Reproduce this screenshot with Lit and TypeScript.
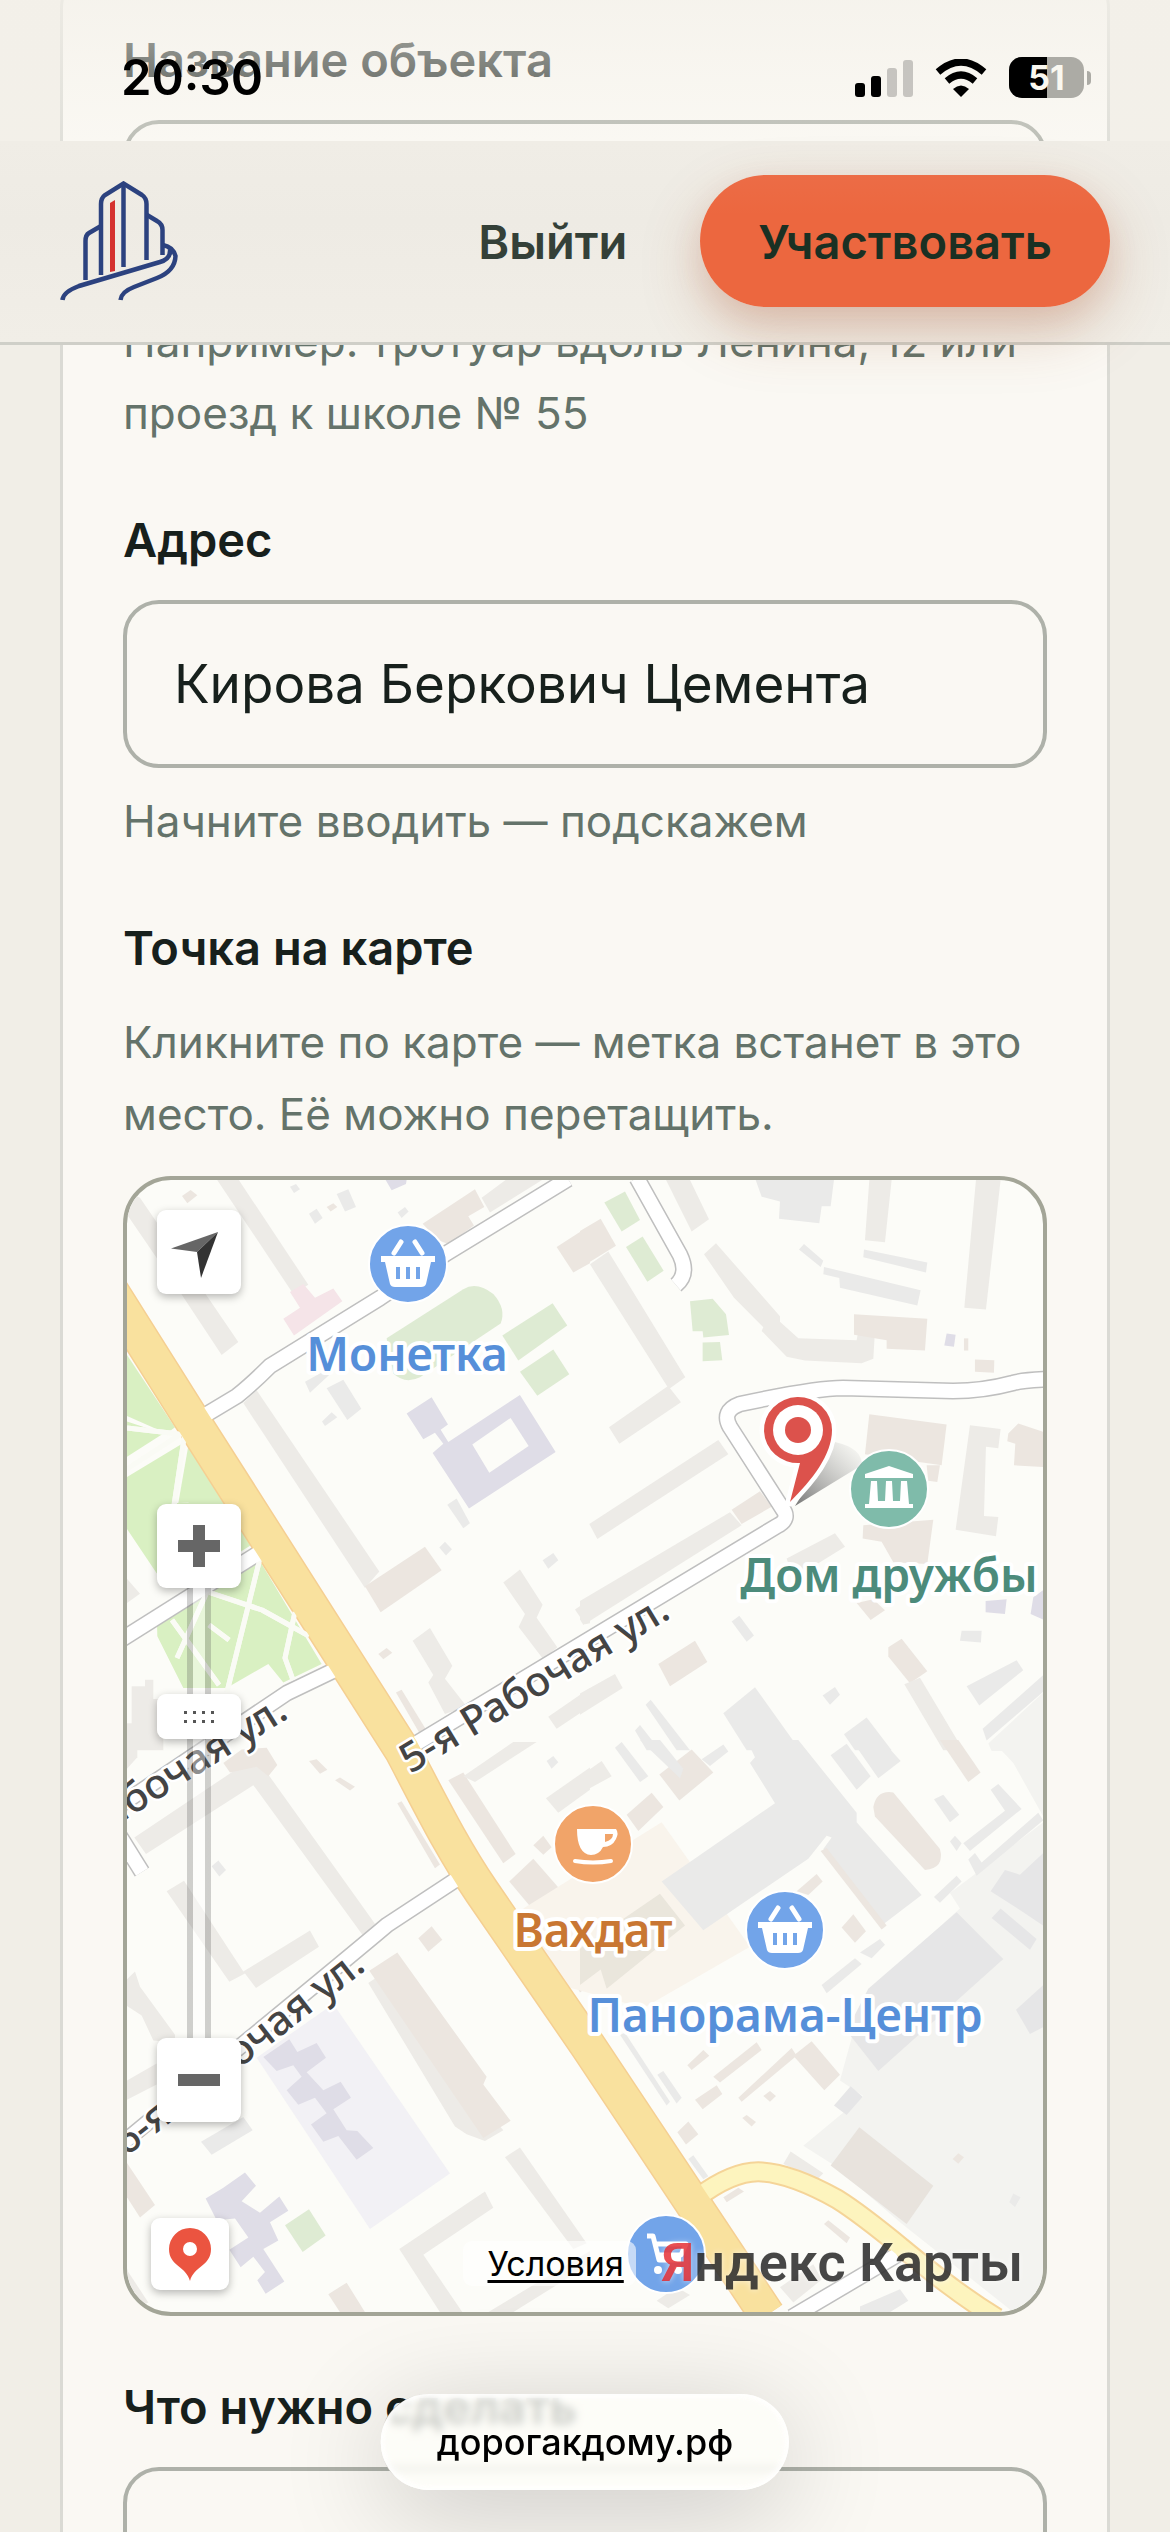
import { LitElement, html, svg, css } from "lit";
import { customElement, property, state } from "lit/decorators.js";

type Shape = [kind: string, points: string];

interface Tile {
  transform: string;
  shapes: Shape[];
}

interface Road {
  kind: string;
  d: string;
}

interface Place {
  name: string;
  kind: string;
  icon: string;
  x: number;
  y: number;
  textX: number;
  textY: number;
}

const TILES: Tile[] = [
  {
    transform: "translate(-7 -10) scale(.3333 .37)",
    shapes: [
      ["park", "21,500 165,695 140,712 21,665"],
      ["park", "21,680 130,712 21,775"],
      ["park", "21,830 190,738 162,900 205,900 260,800 330,900 400,1010 240,1100 110,1090 21,970"],
      ["park", "205,745 320,895 175,900"],
      ["park", "110,1190 240,1120 390,1060 425,1065 605,1335 490,1385 445,1335 320,1400 190,1400 112,1260"],
      ["house", "21,60 60,75 355,465 305,500 180,330 21,120"],
      ["house", "290,25 355,25 565,310 520,335"],
      ["pink", "510,330 550,308 585,345 640,320 667,355 522,447 490,402 540,372"],
      ["shed", "650,65 685,52 708,100 675,112"],
      ["shed", "567,118 590,105 608,130 585,145"],
      ["shed", "833,115 855,100 866,112 845,130"],
      ["shed", "510,45 528,38 540,52 522,62"],
      ["beige", "186,70 212,54 232,68 202,90"],
      ["beige", "620,100 640,90 652,100 632,112"],
      ["school", "797,27 860,27 858,38 815,55"],
      ["beige", "908,145 1065,52 1093,100 1045,125 1062,150 985,200 955,190"],
      ["house", "1085,75 1160,25 1270,25 1110,115"],
      ["beige", "1310,208 1410,150 1410,252 1360,277"],
      ["green", "800,455 1030,322 Q1070,300 1120,335 Q1160,375 1142,415 L900,560 Q855,580 820,550"],
      ["green", "1147,447 1298,360 1342,420 1195,515"],
      ["green", "1200,545 1300,485 1348,552 1252,610"],
      ["shed", "620,590 670,567 724,645 682,676"],
      ["shed", "555,572 620,540 630,552 570,602"],
      ["shed", "606,680 635,655 652,668 615,692"],
      ["house", "370,630 410,595 778,1085 735,1130"],
      ["beige", "735,1125 915,1018 965,1082 782,1195"],
      ["school", "860,658 935,614 984,688 962,702 985,735 1200,608 1307,762 1047,915 938,765 970,740 945,710 910,728"],
      ["ground", "1057,742 1172,670 1226,746 1108,818"],
      ["shed", "982,905 1010,888 1050,955 1030,968"],
      ["shed", "958,1020 975,1005 996,1025 978,1042"],
      ["shed", "1268,1055 1300,1035 1315,1055 1285,1078"],
      ["house", "1150,1115 1200,1080 1268,1175 1250,1210 1312,1290 1270,1322 1196,1235 1215,1200"],
      ["house", "878,1272 930,1238 997,1340 975,1375 1040,1450 975,1470 925,1385 940,1365"],
      ["house", "1285,1478 1410,1400 1410,1450 1310,1510"],
      ["house", "1365,1188 1410,1160 1410,1225 1395,1228"],
      ["beige", "775,1308 800,1292 817,1305 790,1322"],
      ["house", "35,1395 75,1395 75,1378 100,1378 100,1430 130,1430 130,1568 21,1568 21,1495 35,1495"],
      ["house", "21,1105 60,1145 21,1170"],
      ["beige", "828,1412 845,1405 930,1530 910,1540"],
    ],
  },
  {
    transform: "translate(453 -10) scale(.3333 .37)",
    shapes: [
      ["house", "258,27 330,27 387,133 335,166"],
      ["green", "73,88 135,58 180,135 125,166"],
      ["green", "138,208 188,180 251,272 202,302"],
      ["green", "330,355 398,348 438,390 447,446 370,453 368,436 338,436"],
      ["green", "368,466 420,465 427,514 368,517"],
      ["beige", "0,165 62,132 108,205 0,265"],
      ["house", "30,255 85,220 316,560 270,590 303,628 118,740 87,695 262,585"],
      ["house", "28,957 415,730 445,768 52,997"],
      ["house", "0,1165 450,925 485,960 10,1230 0,1215"],
      ["beige", "455,918 540,868 575,910 485,957"],
      ["house", "372,228 408,198 600,395 600,410 655,455 830,460 835,435 885,435 880,510 845,522 675,515 620,505 545,435 550,425 462,345"],
      ["shed", "527,27 762,27 752,98 725,98 718,144 597,132 600,85 545,72"],
      ["house", "868,27 935,27 915,195 855,190"],
      ["house", "1188,27 1262,27 1218,377 1153,372"],
      ["shed", "657,215 672,200 730,245 722,262"],
      ["shed", "852,215 1042,250 1038,277 850,236"],
      ["shed", "732,262 1022,325 1012,366 780,318 778,292 730,282"],
      ["beige", "822,390 1042,402 1035,488 920,483 920,460 822,445"],
      ["school", "1100,442 1127,445 1122,478 1093,474"],
      ["beige", "1152,455 1165,455 1165,488 1152,488"],
      ["beige", "1185,512 1243,514 1242,548 1185,545"],
      ["beige", "868,660 1100,688 1085,798 855,768"],
      ["beige", "1040,798 1080,798 1072,843 1045,840"],
      ["house", "1170,690 1262,700 1255,752 1218,748 1212,935 1255,938 1248,990 1127,972"],
      ["beige", "1315,685 1390,708 1390,803 1302,798 1306,740 1282,733 1285,712"],
      ["beige", "850,960 1060,945 1042,1065 940,1060 905,1005 848,996"],
      ["house", "620,1050 765,982 795,1018 640,1105"],
      ["beige", "830,1170 880,1160 915,1190 872,1216"],
      ["school", "1217,1165 1280,1160 1275,1200 1217,1195"],
      ["school", "1360,1155 1390,1135 1390,1215 1352,1200"],
      ["shed", "1145,1245 1205,1245 1203,1277 1140,1272"],
      ["shed", "1160,1395 1310,1325 1330,1352 1198,1447"],
      ["beige", "925,1290 965,1267 1042,1355 990,1387 925,1315"],
      ["house", "973,1390 1020,1372 1150,1568 1090,1568"],
      ["beige", "235,1335 345,1272 382,1330 270,1395"],
      ["house", "0,1415 105,1362 128,1400 0,1472"],
      ["shed", "455,1220 478,1205 522,1258 500,1275"],
      ["shed", "430,1468 525,1398 660,1568 500,1568"],
      ["shed", "792,1525 860,1480 935,1568 825,1568"],
      ["shed", "197,1445 212,1432 330,1568 290,1568"],
      ["shed", "165,1515 180,1500 240,1568 200,1568"],
      ["shed", "728,1420 765,1397 780,1418 750,1445"],
      ["shed", "1208,1510 1390,1365 1390,1410 1220,1542"],
      ["yard", "1225,1550 1390,1412 1390,1570 1235,1570"],
    ],
  },
  {
    transform: "translate(-7 560) scale(.3333 .3827)",
    shapes: [
      ["house", "43,255 360,70 420,60 765,480 730,512 400,118 78,298"],
      ["beige", "310,60 365,25 440,20 472,65 445,95 410,70 330,85"],
      ["house", "140,395 192,368 370,605 570,498 597,540 408,648 375,610 328,632"],
      ["shed", "275,330 295,315 318,340 298,357"],
      ["house", "21,625 45,605 60,645 165,770 165,790 100,785 65,720 21,695"],
      ["house", "21,890 110,845 110,900 21,940"],
      ["shed", "243,1050 370,985 398,1020 275,1084"],
      ["schoolyard", "410,830 640,690 990,1133 750,1278"],
      ["school", "430,828 508,782 532,815 590,792 618,830 560,868 610,915 662,893 693,935 640,965 680,1020 712,1022 760,1066 710,1097 655,1035 610,1050 573,1005 620,975 585,935 535,953 500,915 545,880 520,850 470,865"],
      ["school", "257,1198 310,1170 375,1130 408,1165 365,1205 420,1235 478,1193 505,1230 450,1260 475,1308 430,1330 493,1415 437,1447 412,1412 435,1390 400,1350 362,1378 328,1332 385,1300 345,1250 290,1255"],
      ["green", "495,1268 567,1226 617,1295 548,1338"],
      ["beige", "21,1105 105,1215 60,1248 21,1195"],
      ["beige", "625,1448 680,1418 735,1495 660,1495"],
      ["house", "21,1385 85,1470 60,1480 21,1440"],
      ["house", "745,635 805,600 1080,950 1150,1020 1095,1048 1040,1030 1005,1010"],
      ["beige", "748,603 832,555 1100,880 1090,900 1172,995 1090,1040"],
      ["beige", "895,518 935,487 967,522 925,553"],
      ["house", "1155,1090 1200,1065 1400,1315 1360,1330"],
      ["house", "838,1330 1095,1180 1120,1222 910,1345 1027,1495 960,1495"],
      ["house", "1105,1495 1410,1335 1410,1370 1180,1495"],
      ["beige", "985,105 1030,85 1187,298 1150,322"],
      ["house", "1030,95 1180,5 1250,5 1065,110"],
      ["house", "1278,152 1410,72 1410,130 1315,190"],
      ["beige", "1240,275 1270,250 1295,280 1270,300"],
      ["beige", "1168,370 1240,310 1375,445 1330,475 1260,465"],
      ["beige", "1320,560 1410,525 1410,640 1380,660"],
      ["beige", "567,55 590,50 622,78 600,88"],
      ["beige", "645,105 660,98 705,122 690,132"],
      ["beige", "832,165 845,160 960,325 945,335"],
      ["shed", "1280,55 1300,42 1315,58 1295,75"],
      ["house", "21,0 52,0 52,45 21,75"],
    ],
  },
  {
    transform: "translate(453 560) scale(.3333 .3827)",
    shapes: [
      ["yard", "1390,215 1110,400 1140,440 860,660 840,700 780,890 850,930 670,1060 760,1110 960,1260 1300,1495 1390,1495"],
      ["yard", "1235,0 1390,0 1390,200 1300,60"],
      ["cream", "-170,440 245,215 510,540 190,700 -60,640"],
      ["shed", "500,0 655,0 830,190 830,215 1025,405 905,485 730,285 755,255 740,250 685,310 370,497 245,370 585,165 510,60 525,45"],
      ["beige", "722,290 740,282 920,485 905,495"],
      ["yellow", "0,545 240,402 315,485 80,650 62,600 0,640"],
      ["beige", "140,195 215,138 250,175 175,238"],
      ["beige", "238,90 335,25 400,85 298,158"],
      ["shed", "752,40 800,10 872,95 830,130"],
      ["shed", "815,0 905,0 962,55 895,100"],
      ["shed", "105,20 125,5 205,95 180,110"],
      ["shed", "180,0 240,0 310,75 300,100"],
      ["shed", "365,50 430,12 445,30 390,68"],
      ["house", "0,95 65,55 95,95 0,140"],
      ["beige", "1080,0 1135,0 1202,85 1165,110"],
      ["beige", "880,175 Q890,130 940,137 L1080,285 Q1095,335 1035,340 L885,200"],
      ["shed", "1062,155 1090,143 1138,195 1110,215"],
      ["shed", "1232,130 1255,115 1325,180 1170,290 1150,270 1275,185"],
      ["shed", "1165,312 1185,295 1205,320 1375,190 1390,210 1190,355"],
      ["shed", "1110,265 1125,250 1145,270 1130,290"],
      ["shed", "1062,410 1130,355 1145,370 1080,425"],
      ["store", "865,650 1130,450 1270,572 895,865 800,760"],
      ["store", "1232,395 1275,340 1320,352 1390,295 1390,485 1330,450"],
      ["store", "1235,465 1262,440 1370,520 1350,548"],
      ["store", "1308,705 1390,640 1390,750 1350,768"],
      ["beige", "785,490 820,455 858,500 825,530"],
      ["beige", "650,395 710,350 728,370 685,405"],
      ["shed", "725,640 825,570 845,585 740,662"],
      ["shed", "840,555 900,520 915,535 875,570"],
      ["beige", "640,825 695,787 780,875 733,915"],
      ["beige", "475,935 635,805 650,825 485,945"],
      ["beige", "400,880 530,790 545,810 420,895"],
      ["beige", "322,850 370,810 388,825 335,862"],
      ["beige", "345,940 410,902 427,925 368,965"],
      ["beige", "292,1025 325,997 355,1030 318,1057"],
      ["beige", "550,930 570,917 588,930 570,945"],
      ["beige", "487,988 500,980 528,998 515,1010"],
      ["shed", "120,770 135,765 270,945 260,955"],
      ["shed", "232,875 250,865 305,935 290,950"],
      ["store", "762,955 812,905 848,932 800,980"],
      ["warehouse", "752,1112 838,1012 1060,1165 980,1265"],
      ["house", "610,1108 632,1075 730,1132 712,1148"],
      ["beige", "430,1195 475,1170 492,1180 440,1208"],
      ["shed", "325,1095 340,1085 385,1140 370,1148"],
      ["beige", "732,1265 745,1255 810,1300 800,1315"],
      ["beige", "1118,1095 1135,1080 1152,1090 1135,1107"],
      ["shed", "1288,1208 1300,1185 1322,1195 1305,1220"],
      ["house", "600,1430 700,1370 725,1410 640,1470"],
      ["shed", "840,1480 960,1435 985,1465 930,1495 840,1495"],
      ["house", "230,1465 290,1430 330,1450 265,1485"],
    ],
  },
];

const ROADS: Road[] = [
  { kind: "path", d: "M0 248 52 254M0 289 60 250M58 252 46 332M75 410 135 430 182 456M135 370 100 512M45 440 92 505M80 412 50 478M82 445 102 460M168 432 158 478 166 500" },
  { kind: "street", d: "M441-1 320 73 253 118 143 186Q125 204 110 216L80 234" },
  { kind: "street", d: "M510-2 553 75Q562 94 549 105" },
  { kind: "street", d: "M925 199Q896 200 886 203 856 211 826 211L716 208Q688 208 613 224 594 231 603 247L655 328Q664 339 650 346L290 563" },
  { kind: "street", d: "M-8 461 135 371" },
  { kind: "street", d: "M212 488 160 513-8 626" },
  { kind: "street", d: "M330 699 260 745Q226 774-8 966" },
  { kind: "street", d: "M-8 655 15 692" },
  { kind: "street", d: "M665 1137 770 1075" },
  { kind: "avenue", d: "M570 1018Q607 990 635 992 665 994 710 1019C760 1050 800 1095 870 1138" },
  { kind: "highway", d: "M-22 102 65 240 275 570C305 627 325 668 355 712L461 866 640 1135" },
];

const PLACES: Place[] = [
  { name: "Монетка", kind: "shop", icon: "basket", x: 281, y: 84, textX: 280, textY: 191 },
  { name: "Дом дружбы", kind: "culture", icon: "museum", x: 762, y: 309, textX: 762, textY: 412 },
  { name: "Вахдат", kind: "cafe", icon: "cup", x: 466, y: 664, textX: 466, textY: 767 },
  { name: "Панорама-Центр", kind: "shop", icon: "basket", x: 658, y: 750, textX: 658, textY: 852 },
  { name: "", kind: "shop", icon: "cart", x: 539, y: 1074, textX: 0, textY: 0 },
];

const STREETS = [
  { name: "5-я Рабочая ул.", transform: "translate(545 437) rotate(-31)" },
  { name: "6-я Рабочая ул.", transform: "translate(163 537) rotate(-32)" },
  { name: "6-я Рабочая ул.", transform: "translate(240 789) rotate(-38)" },
];

const ICONS: Record<string, unknown> = {
  basket: svg`
    <path d="M-14-11-7-22M14-11 7-22" fill="none" stroke="#fff" stroke-width="5" stroke-linecap="round" />
    <path d="M-27-8H27V-2H23L18 20Q17 23 13 23H-13Q-17 23-18 20L-23-2H-27Z" fill="#fff" />
    <path d="M-12 3H-8V15H-12ZM-2 3H2V15H-2ZM8 3H12V15H8Z" fill="#72a4e9" />
  `,
  museum: svg`
    <path d="M0-23 24-15V-11H-24V-15ZM-18-8H-12L-11 12H-4L-3-8H3L4 12H11L12-8H18L20 15H24V19H-24V15H-20Z" fill="#fff" />
  `,
  cup: svg`
    <path d="M-16-15H23Q26-11 23-5 19 3 10 3 6 11-2 11-16 10-16-15ZM12-10V-2Q20-4 20-10Z" fill="#fff" fill-rule="evenodd" />
    <path d="M-18 17Q0 20 18 17" fill="none" stroke="#fff" stroke-width="4" stroke-linecap="round" />
  `,
  cart: svg`
    <path d="M-19-18H-13L-7 6H15M-11-10H20L15 1H-8" fill="none" stroke="#fff" stroke-width="5" stroke-linejoin="round" />
    <circle cx="-8" cy="16" r="4" fill="#fff" />
    <circle cx="12" cy="16" r="4" fill="#fff" />
  `,
};

@customElement("status-bar")
export class StatusBar extends LitElement {
  @property({ type: String }) public time = "";
  @property({ type: Number }) public battery = 100;

  protected render() {
    return html`
      <span class="time">${this.time}</span>
      <svg width="58" height="38" viewBox="0 0 58 38" aria-hidden="true">
        <rect x="0" y="24" width="10" height="14" rx="3" />
        <rect x="16" y="17" width="10" height="21" rx="3" />
        <rect class="off" x="32" y="9" width="10" height="29" rx="3" />
        <rect class="off" x="48" y="1" width="10" height="37" rx="3" />
      </svg>
      <svg width="52" height="38" viewBox="0 0 52 38" aria-hidden="true">
        <path d="M26 38 18 30Q26 23 34 30Z" />
        <path d="M12 22Q26 10 40 22" fill="none" stroke="#000" stroke-width="7" />
        <path d="M3 13Q26-7 49 13" fill="none" stroke="#000" stroke-width="7" />
      </svg>
      <div class="battery">
        <div class="cell">
          <div class="charge" style="width: ${this.battery}%"></div>
          <span class="percent">${this.battery}</span>
        </div>
        <div class="nub"></div>
      </div>
    `;
  }

  static styles = css`
    :host {
      display: flex;
      align-items: center;
      gap: 22px;
      height: 141px;
      box-sizing: border-box;
      padding: 14px 79px 0 121px;
      background: linear-gradient(rgba(244, 241, 234, 0.7), rgba(250, 248, 241, 0.2));
      color: #000;
    }

    .time {
      flex: 1;
      font-size: 49px;
      font-weight: 600;
    }

    .off {
      opacity: 0.2;
    }

    .battery {
      display: flex;
      align-items: center;
      gap: 3px;
    }

    .cell {
      position: relative;
      display: grid;
      place-items: center;
      width: 75px;
      height: 41px;
      border-radius: 13px;
      background: #acaba5;
      overflow: hidden;
    }

    .charge {
      position: absolute;
      inset: 0 auto 0 0;
      background: #000;
    }

    .percent {
      position: relative;
      color: #faf8f0;
      font-size: 34px;
      font-weight: 700;
    }

    .nub {
      width: 4px;
      height: 14px;
      border-radius: 0 4px 4px 0;
      background: #acaba5;
    }
  `;
}

@customElement("site-header")
export class SiteHeader extends LitElement {
  protected render() {
    return html`
      <a class="logo" href="/" aria-label="Дорога к дому">
        <svg width="118" height="120" viewBox="0 0 118 120">
          <g fill="none" stroke="#2c427f" stroke-width="4.500">
            <path d="M25.500 99V60Q25.500 54 29 52L41 45" />
            <path d="M41 94V23Q41 17 45 14L63.500 2.500 82 14Q86.500 17 86.500 23V79" />
            <path d="M63.500 3V86" />
            <path d="M87 34 97 40Q102.500 43 102.500 49V74" />
            <path d="M2.500 119Q3 111 19 105L100 81Q111 78 110 68" />
            <path d="M103 64Q113 66 115.500 75 115 90 97 97L74 106Q61 111 60.500 119" />
          </g>
          <path d="M50 22 55 19V90L50 91Z" fill="#d5322f" />
        </svg>
      </a>
      <nav>
        <a class="exit" href="#exit">Выйти</a>
        <button type="button">Участвовать</button>
      </nav>
    `;
  }

  static styles = css`
    :host {
      display: flex;
      align-items: center;
      justify-content: space-between;
      padding: 34px 60px 35px;
      border-bottom: 3px solid #cfcfc8;
      background: linear-gradient(#f0ede6, #eeebe4 40%, #f1eee7);
    }

    .logo,
    .logo svg {
      display: block;
    }

    nav {
      display: flex;
      align-items: center;
      gap: 73px;
    }

    .exit {
      color: #344038;
      font-size: 47px;
      font-weight: 600;
      text-decoration: none;
    }

    button {
      height: 132px;
      padding: 0 58px;
      border: 0;
      border-radius: 66px;
      background: linear-gradient(#ec6c46, #ec673f 30%);
      box-shadow: 0 24px 60px rgba(160, 80, 40, 0.26), 0 12px 30px rgba(200, 80, 60, 0.12);
      color: #1a3023;
      font: inherit;
      font-size: 47px;
      font-weight: 600;
    }
  `;
}

@customElement("point-map")
export class PointMap extends LitElement {
  @state() zoom = 17;

  private onZoom = (event: Event): void => {
    this.zoom = Number((event.target as HTMLInputElement).value);
  };

  private changeZoom(delta: number): void {
    this.zoom = Math.min(23, Math.max(0, this.zoom + delta));
  }

  private renderPlace(place: Place) {
    return svg`
      <g class=${place.kind}>
        <g transform="translate(${place.x} ${place.y})">
          <circle class="disc" r="39" />
          ${ICONS[place.icon]}
        </g>
        <text class="place" x=${place.textX} y=${place.textY}>${place.name}</text>
      </g>
    `;
  }

  private renderPin() {
    return svg`
      <defs>
        <linearGradient id="shade" x1="0" y1="1" x2="1" y2="0">
          <stop offset="0" stop-color="#555" stop-opacity=".8" />
          <stop offset="1" stop-color="#999" stop-opacity="0" />
        </linearGradient>
      </defs>
      <path d="M668 326 735 285Q735 268 708 262Z" fill="url(#shade)" />
      <path
        class="pin"
        d="M663 322 673 283A34 33 0 1 1 705 250C705 275 685 300 663 322Z"
      />
      <circle cx="671" cy="250" r="25" fill="#fff" />
      <circle cx="671" cy="250" r="13" fill="#dc524c" />
    `;
  }

  protected render() {
    return html`
      <svg class="canvas" viewBox="0 0 916 1132" preserveAspectRatio="xMinYMin slice">
        ${TILES.map(
          (tile) => svg`
            <g transform=${tile.transform}>
              ${tile.shapes.map(([kind, points]) => svg`<path class=${kind} d="M${points}Z" />`)}
            </g>
          `
        )}
        ${ROADS.map((road) => svg`<path class="road ${road.kind}-edge" d=${road.d} />`)}
        ${ROADS.map((road) => svg`<path class="road ${road.kind}" d=${road.d} />`)}
        ${STREETS.map(
          (street) => svg`<text class="street-name" transform=${street.transform}>${street.name}</text>`
        )}
        ${PLACES.map((place) => this.renderPlace(place))}
        ${this.renderPin()}
      </svg>

      <button class="control locate" type="button" aria-label="Моё местоположение">
        <svg width="84" height="84" viewBox="0 0 84 84">
          <path d="M61 22 14 38.500 40 42Z" fill="#666" />
          <path d="M61 22 40 42 44 68Z" fill="#333" />
        </svg>
      </button>

      <div class="zoom">
        <button class="control" type="button" aria-label="Приблизить" @click=${() => this.changeZoom(1)}>
          <svg width="84" height="84" viewBox="0 0 84 84">
            <path d="M36 21H48V36H63V48H48V63H36V48H21V36H36Z" fill="#666" />
          </svg>
        </button>
        <input
          type="range"
          min="0"
          max="23"
          aria-label="Масштаб"
          .value=${String(this.zoom)}
          @input=${this.onZoom}
        />
        <button class="control" type="button" aria-label="Отдалить" @click=${() => this.changeZoom(-1)}>
          <svg width="84" height="84" viewBox="0 0 84 84">
            <path d="M21 36H63V48H21Z" fill="#666" />
          </svg>
        </button>
      </div>

      <button class="control open" type="button" aria-label="Открыть в Картах">
        <svg width="42" height="53" viewBox="0 0 42 53">
          <path
            d="M21 0A21 21 0 0 1 42 21C42 38 25 38 21 53 17 38 0 38 0 21A21 21 0 0 1 21 0ZM21 14A7 7 0 1 0 21 28 7 7 0 1 0 21 14Z"
            fill="#eb5440"
            fill-rule="evenodd"
          />
        </svg>
      </button>

      <div class="copyright">
        <a class="terms" href="#terms">Условия</a>
        <a class="brand" href="#maps"><span>Я</span>ндекс Карты</a>
      </div>
    `;
  }

  static styles = css`
    :host {
      display: block;
      position: relative;
      height: 1140px;
      box-sizing: border-box;
      border: 4px solid #a3a597;
      border-radius: 48px;
      background: #fcfcf8;
      overflow: hidden;
    }

    .canvas {
      display: block;
      width: 100%;
      height: 100%;
    }

    .park {
      fill: #d9f0c2;
    }

    .green {
      fill: #deebd3;
    }

    .house {
      fill: #edebe7;
    }

    .beige {
      fill: #ece6e0;
    }

    .warehouse {
      fill: #e8e3dd;
    }

    .shed {
      fill: #eaeae9;
    }

    .store {
      fill: #e6e6e7;
    }

    .school {
      fill: #dfdde7;
    }

    .schoolyard {
      fill: #f2f1f5;
    }

    .yard {
      fill: #f3f3f0;
    }

    .cream {
      fill: #f9f4ec;
    }

    .yellow {
      fill: #eae6dc;
    }

    .pink {
      fill: #f5e4e8;
    }

    .ground {
      fill: #fcfcf8;
    }

    .road {
      fill: none;
      stroke-linejoin: round;
    }

    .path,
    .path-edge {
      stroke: #fafbf5;
      stroke-width: 5px;
    }

    .street-edge {
      stroke: #bfbfbf;
      stroke-width: 17px;
    }

    .street {
      stroke: #fff;
      stroke-width: 14px;
    }

    .avenue-edge {
      stroke: #f5d498;
      stroke-width: 21px;
    }

    .avenue {
      stroke: #fdf4be;
      stroke-width: 17px;
    }

    .highway-edge {
      stroke: #f5cf92;
      stroke-width: 37px;
    }

    .highway {
      stroke: #f9e19e;
      stroke-width: 34px;
    }

    text {
      font-family: "Noto Sans", "Open Sans", sans-serif;
      paint-order: stroke;
      stroke: #fff;
      stroke-linejoin: round;
    }

    .street-name {
      fill: #444;
      stroke-width: 5px;
      font-size: 41px;
      font-weight: 500;
      text-anchor: end;
    }

    .place {
      stroke-width: 8px;
      font-size: 46px;
      font-weight: 600;
      text-anchor: middle;
    }

    .disc {
      stroke: #fff;
      stroke-width: 2px;
    }

    .shop .disc {
      fill: #72a4e9;
    }

    .shop .place {
      fill: #568fd9;
    }

    .culture .disc {
      fill: #7fbbaa;
    }

    .culture .place {
      fill: #4c8b7b;
    }

    .cafe .disc {
      fill: #f1a469;
    }

    .cafe .place {
      fill: #c97733;
    }

    .pin {
      fill: #dc524c;
      stroke: #fff;
      stroke-width: 9px;
      stroke-linejoin: round;
      paint-order: stroke;
    }

    .control {
      display: grid;
      place-items: center;
      width: 84px;
      height: 84px;
      padding: 0;
      border: 0;
      border-radius: 9px;
      background: #fff;
      box-shadow: 0 3px 9px rgba(0, 0, 0, 0.28);
    }

    .locate {
      position: absolute;
      top: 30px;
      left: 30px;
    }

    .zoom {
      position: absolute;
      top: 324px;
      left: 30px;
      display: flex;
      flex-direction: column;
    }

    input {
      appearance: none;
      writing-mode: vertical-lr;
      direction: rtl;
      width: 84px;
      height: 450px;
      margin: 0;
      background: linear-gradient(
          90deg,
          rgba(90, 90, 90, 0.28) 6px,
          rgba(255, 255, 255, 0.4) 6px 18px,
          rgba(90, 90, 90, 0.28) 18px
        )
        center / 24px 100% no-repeat;
    }

    input::-webkit-slider-thumb {
      appearance: none;
      box-sizing: border-box;
      width: 84px;
      height: 45px;
      padding: 17px 27px 16px;
      border-radius: 9px;
      background: conic-gradient(at 3px 3px, transparent 270deg, #555 270deg) 0 0 / 9px 9px content-box,
        linear-gradient(#fff, #fff) border-box;
      box-shadow: 0 3px 9px rgba(0, 0, 0, 0.28);
    }

    .open {
      position: absolute;
      left: 24px;
      bottom: 22px;
      width: 78px;
      height: 72px;
    }

    .copyright {
      position: absolute;
      right: 20px;
      bottom: 13px;
      display: flex;
      align-items: center;
      gap: 26px;
    }

    .terms {
      padding: 0 12px 0 24px;
      border-radius: 9px;
      background: rgba(255, 255, 255, 0.6);
      color: #000;
      font-size: 34px;
      line-height: 45px;
      text-underline-offset: 4px;
    }

    .brand {
      color: rgba(30, 30, 30, 0.82);
      font-family: Roboto, "Noto Sans", sans-serif;
      font-size: 54px;
      font-weight: 600;
      line-height: 72px;
      text-decoration: none;
      text-shadow: 0 0 6px rgba(255, 255, 255, 0.6);
    }

    .brand span {
      color: rgba(228, 40, 45, 0.82);
    }
  `;
}

@customElement("app-root")
export class AppRoot extends LitElement {
  @state() address = "Кирова Беркович Цемента";

  private onAddress = (event: Event): void => {
    this.address = (event.target as HTMLInputElement).value;
  };

  protected render() {
    return html`
      <form class="card">
        <div class="field">
          <label for="name">Название объекта</label>
          <input id="name" type="text" />
          <p class="hint">Например: тротуар вдоль Ленина, 12 или проезд к школе № 55</p>
        </div>
        <div class="field">
          <label for="address">Адрес</label>
          <input id="address" type="text" .value=${this.address} @input=${this.onAddress} />
          <p class="hint">Начните вводить — подскажем</p>
        </div>
        <div class="field">
          <h2>Точка на карте</h2>
          <p class="intro">Кликните по карте — метка встанет в это место. Её можно перетащить.</p>
          <point-map></point-map>
        </div>
        <div class="field">
          <label for="work">Что нужно сделать</label>
          <textarea id="work"></textarea>
        </div>
      </form>

      <div class="top">
        <status-bar time="20:30" battery="51"></status-bar>
        <site-header></site-header>
      </div>
      <button class="location" type="button">дорогакдому.рф</button>
    `;
  }

  static styles = css`
    :host {
      display: block;
      position: relative;
      height: 100vh;
      overflow: hidden;
      background: #f1eee7;
      color: #17201c;
      font-family: Inter, Roboto, sans-serif;
    }

    .top {
      position: absolute;
      inset: 0 0 auto;
    }

    .card {
      display: flex;
      flex-direction: column;
      gap: 57px;
      margin: -32px 60px 0;
      padding: 55px 60px 60px;
      border: 3px solid #dadad4;
      border-radius: 40px;
      background: #faf8f3;
    }

    .field {
      display: flex;
      flex-direction: column;
    }

    label,
    h2 {
      margin: 0;
      font-size: 47px;
      font-weight: 600;
      line-height: 68px;
    }

    input,
    textarea {
      box-sizing: border-box;
      width: 100%;
      height: 168px;
      margin: 26px 0 0;
      padding: 0 47px;
      border: 4px solid #aeb1a9;
      border-radius: 36px;
      background: transparent;
      color: inherit;
      font: inherit;
      font-size: 53px;
    }

    textarea {
      height: 400px;
      padding: 47px;
      resize: none;
    }

    .hint,
    .intro {
      margin: 0;
      color: #64736a;
      font-size: 44px;
      line-height: 72px;
    }

    .hint {
      margin-top: 17px;
    }

    .intro {
      margin: 24px 0 26px;
    }

    .location {
      position: absolute;
      left: 50%;
      bottom: 42px;
      height: 96px;
      padding: 0 56px;
      transform: translateX(-50%);
      border: 0;
      border-radius: 48px;
      background: rgba(254, 254, 249, 0.78);
      box-shadow: 0 20px 110px rgba(0, 0, 0, 0.2), inset 0 0 6px 3px #fff;
      backdrop-filter: blur(4px);
      color: #000;
      font: inherit;
      font-size: 36px;
      font-weight: 500;
      white-space: nowrap;
    }
  `;
}
